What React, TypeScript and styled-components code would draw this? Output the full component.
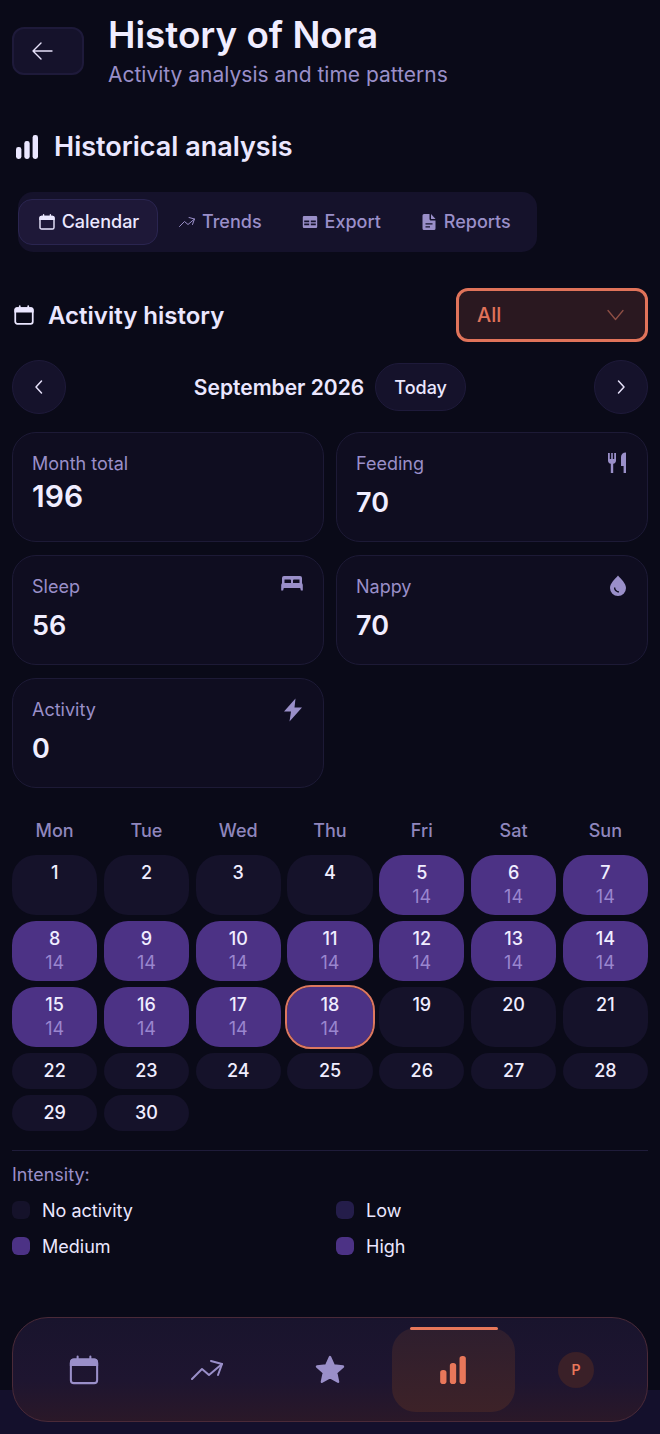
import React from 'react';
import styled, { createGlobalStyle } from 'styled-components';

const GlobalStyle = createGlobalStyle`
  html, body {
    margin: 0;
    padding: 0;
    background: #0a0a18;
    font-family: Inter, "Liberation Sans", sans-serif;
    color: #f0edff;
  }
  * { box-sizing: border-box; }
`;

const Page = styled.div`
  width: 660px;
  height: 1434px;
  overflow: hidden;
  position: relative;
  padding: 12px 12px 0;
  background: #0a0a18;
`;

const Header = styled.header`
  display: flex;
  align-items: flex-start;
  gap: 24px;
  height: 88px;
`;

const BackButton = styled.button`
  width: 72px;
  height: 48px;
  margin-top: 15px;
  display: flex;
  align-items: center;
  padding: 0 0 0 16px;
  border-radius: 12px;
  border: 2px solid #1e1a3a;
  background: #15122b;
  color: #e6e1fa;
`;

const TitleBlock = styled.div`
  display: flex;
  flex-direction: column;
`;

const Title = styled.h1`
  margin: 0;
  font-size: 36.8px;
  line-height: 46px;
  font-weight: 600;
  color: #f0edff;
`;

const Subtitle = styled.div`
  font-size: 21px;
  line-height: 34px;
  color: #9a8fc9;
`;

const SectionTitle = styled.h2`
  margin: 30px 0 0;
  display: flex;
  align-items: center;
  gap: 15px;
  padding-left: 3px;
  font-size: 27px;
  line-height: 34px;
  font-weight: 600;
  color: #ebe7ff;
`;

const TabBar = styled.div`
  display: inline-flex;
  align-items: center;
  margin: 28px 0 0 6px;
  height: 60px;
  padding: 0 6px 0 0;
  border-radius: 15px;
  background: #15122b;
`;

const Tab = styled.div<{ $active?: boolean }>`
  display: flex;
  align-items: center;
  justify-content: center;
  gap: 7px;
  height: 46px;
  width: ${(p) => p.$active ? '140px' : 'auto'};
  padding: ${(p) => p.$active ? '0 0 0 2px' : '0 20px'};
  margin-right: ${(p) => p.$active ? '1px' : '0'};
  border-radius: 14px;
  font-size: 18px;
  line-height: 22px;
  font-weight: 500;
  color: ${(p) => p.$active ? '#ebe7ff' : '#9a8fc9'};
  background: ${(p) => p.$active ? '#1e1838' : 'transparent'};
  border: ${(p) => p.$active ? '1px solid #2a2550' : 'none'};
`;

const ActivityRow = styled.div`
  display: flex;
  align-items: center;
  justify-content: space-between;
  margin-top: 36px;
`;

const ActivityTitle = styled.h3`
  margin: 0;
  display: flex;
  align-items: center;
  gap: 14px;
  padding-left: 2px;
  font-size: 24px;
  font-weight: 600;
  color: #ebe7ff;
`;

const Select = styled.div`
  width: 192px;
  height: 54px;
  display: flex;
  align-items: center;
  justify-content: space-between;
  padding: 0 21px 0 18px;
  border: 3px solid #e0735a;
  border-radius: 12px;
  background: #2a1820;
  color: #e0735a;
  font-size: 20px;
  font-weight: 500;
`;

const SelectCaret = styled.span`
  display: flex;
  color: #8f4f45;
`;

const MonthRow = styled.div`
  display: flex;
  align-items: center;
  justify-content: space-between;
  margin-top: 18px;
`;

const RoundButton = styled.div`
  width: 54px;
  height: 54px;
  display: flex;
  align-items: center;
  justify-content: center;
  border-radius: 50%;
  background: #15122b;
  border: 1px solid #1e1a3a;
  color: #e6e1fa;
`;

const MonthCenter = styled.div`
  display: flex;
  align-items: center;
  gap: 11px;
`;

const MonthName = styled.div`
  font-size: 21px;
  font-weight: 600;
  color: #ebe7ff;
`;

const TodayPill = styled.div`
  height: 48px;
  width: 91px;
  display: flex;
  align-items: center;
  justify-content: center;
  border-radius: 24px;
  background: #15122b;
  border: 1px solid #1e1a3a;
  font-size: 18px;
  font-weight: 500;
  color: #ebe7ff;
`;

const StatGrid = styled.div`
  display: grid;
  grid-template-columns: 1fr 1fr;
  gap: 13px 12px;
  margin-top: 18px;
`;

const StatCard = styled.div`
  height: 110px;
  padding: 19px 20px 0 19px;
  border-radius: 24px;
  background: #0f0d20;
  border: 1px solid #1d1a36;
`;

const StatHead = styled.div`
  display: flex;
  align-items: flex-start;
  justify-content: space-between;
  height: 24px;
  color: #9a8fc9;
`;

const StatLabel = styled.div`
  font-size: 18px;
  line-height: 24px;
`;

const StatValue = styled.div<{ $large?: boolean }>`
  margin-top: ${(p) => p.$large ? '1px' : '8px'};
  font-size: ${(p) => p.$large ? '30px' : '27px'};
  line-height: 38px;
  font-weight: 600;
  color: #f0edff;
`;

const WeekGrid = styled.div`
  display: grid;
  grid-template-columns: repeat(7, 1fr);
  gap: 6px 6.5px;
  margin-top: 30px;
`;

const WeekDay = styled.div`
  height: 31px;
  line-height: 26px;
  text-align: center;
  font-size: 18px;
  font-weight: 500;
  color: #8f86bd;
`;

const Day = styled.div<{ $filled?: boolean; $tall?: boolean; $today?: boolean }>`
  height: ${(p) => p.$tall ? '60px' : '36px'};
  padding-top: 6px;
  border-radius: ${(p) => p.$tall ? '24px' : '18px'};
  background: ${(p) => p.$filled ? '#4c3285' : '#15122a'};
  text-align: center;
  font-size: 18px;
  line-height: 24px;
  font-weight: 500;
  color: #f0edff;
  outline: ${(p) => p.$today ? '2px solid #dd7860' : 'none'};
`;

const DayCount = styled.div`
  font-size: 18px;
  line-height: 24px;
  font-weight: 400;
  color: #9a86cf;
`;

const Divider = styled.div`
  height: 1px;
  background: #1f1c3a;
  margin-top: 19px;
`;

const LegendTitle = styled.div`
  margin-top: 12px;
  font-size: 18px;
  line-height: 24px;
  color: #9a8fc9;
`;

const LegendGrid = styled.div`
  display: grid;
  grid-template-columns: 1fr 1fr;
  gap: 12px;
  margin-top: 11px;
`;

const LegendItem = styled.div`
  display: flex;
  align-items: center;
  gap: 12px;
  height: 24px;
  font-size: 18px;
  color: #ebe7ff;
`;

const Swatch = styled.span<{ $color: string }>`
  width: 18px;
  height: 18px;
  border-radius: 6px;
  background: ${(p) => p.$color};
`;

const BottomGlow = styled.div`
  position: absolute;
  left: 0;
  right: 0;
  bottom: 0;
  height: 44px;
  background: #14102c;
`;

const BottomNav = styled.nav`
  position: absolute;
  left: 12px;
  right: 12px;
  bottom: 12px;
  height: 105px;
  display: grid;
  grid-template-columns: repeat(5, 123px);
  align-items: center;
  padding: 0 9.5px;
  border-radius: 36px;
  border: 1px solid #4a2a38;
  background: linear-gradient(180deg, #19142d 0%, #1e1530 60%, #2a1828 100%);
`;

const NavItem = styled.div<{ $active?: boolean }>`
  position: relative;
  height: 84px;
  display: flex;
  align-items: center;
  justify-content: center;
  border-radius: 24px;
  color: ${(p) => p.$active ? '#e8775a' : '#9a8fc9'};
  background: ${(p) => p.$active ? 'linear-gradient(180deg, #2e1e2e, #3d2228)' : 'transparent'};
`;

const ActiveMark = styled.span`
  position: absolute;
  top: -1px;
  left: 18px;
  right: 17px;
  height: 3px;
  border-radius: 2px;
  background: #e8775a;
`;

const Avatar = styled.div`
  width: 36px;
  height: 36px;
  display: flex;
  align-items: center;
  justify-content: center;
  border-radius: 50%;
  background: #3a2028;
  color: #e8775a;
  font-size: 14px;
  font-weight: 600;
`;

const ArrowLeftIcon = () => (
  <svg width="24" height="24" viewBox="0 0 24 24" fill="none" stroke="currentColor" strokeWidth="1.4" strokeLinecap="round" strokeLinejoin="round">
    <path d="M22 12H3M11 4l-8 8 8 8" />
  </svg>
);

const BarsIcon = ({ size = 24 }: { size?: number }) => (
  <svg width={size} height={size} viewBox="0 0 24 24" fill="currentColor">
    <rect x="1" y="12" width="5.4" height="12" rx="2.4" />
    <rect x="9.3" y="6" width="5.4" height="18" rx="2.4" />
    <rect x="17.6" y="0" width="5.4" height="24" rx="2.4" />
  </svg>
);

const CalendarIcon = ({ size = 16, stroke = 1.4 }: { size?: number; stroke?: number }) => (
  <svg width={size} height={size} viewBox="0 0 16 16" fill="none" stroke="currentColor" strokeWidth={stroke} strokeLinecap="round">
    <rect x="1" y="2.4" width="14" height="12.6" rx="1.6" />
    <path d="M1 4.4c0-1.1.7-2 1.6-2h10.8c.9 0 1.6.9 1.6 2v.9H1z" fill="currentColor" />
    <path d="M4.6.8v1.6M11.4.8v1.6" />
  </svg>
);

const TrendIcon = ({ size = 16, stroke = 2 }: { size?: number; stroke?: number }) => (
  <svg width={size} height={size * 0.625} viewBox="0 0 32 20" fill="none" stroke="currentColor" strokeWidth={stroke} strokeLinecap="round" strokeLinejoin="round">
    <path d="M1 19L11 9l7 6L31 4" />
    <path d="M20 1l11 3-4 11" />
  </svg>
);

const TableIcon = () => (
  <svg width="16" height="16" viewBox="0 0 16 16" fill="currentColor">
    <path fillRule="evenodd" d="M2 2h12a1.2 1.2 0 0 1 1.2 1.2v9.6A1.2 1.2 0 0 1 14 14H2a1.2 1.2 0 0 1-1.2-1.2V3.2A1.2 1.2 0 0 1 2 2zm.2 4.6v1.700h5V6.600zm6.600 0v1.700h5V6.600zM2.200 9.500v1.700h5V9.500zm6.600 0v1.700h5V9.500z" />
  </svg>
);

const FileIcon = () => (
  <svg width="16" height="18" viewBox="0 0 16 18" fill="currentColor">
    <path fillRule="evenodd" d="M3 1h5.500v5c0 .8.700 1.500 1.500 1.500h4.500V15.500A1.500 1.500 0 0 1 13 17H3a1.500 1.500 0 0 1-1.500-1.500v-13A1.500 1.500 0 0 1 3 1zm1.500 9.200v1.300h7v-1.300zm0 3v1.300h4.500v-1.300z" />
    <path d="M10 1l4.500 5H10.500a.5.5 0 0 1-.5-.5z" />
  </svg>
);

const ChevronIcon = ({ dir }: { dir: 'left' | 'right' }) => (
  <svg width="20" height="20" viewBox="0 0 20 20" fill="none" stroke="currentColor" strokeWidth="1.5" strokeLinecap="round" strokeLinejoin="round">
    {dir === 'left' && <path d="M12.500 4l-5.500 6 5.500 6" />}
    {dir === 'right' && <path d="M7.500 4l5.500 6-5.500 6" />}
  </svg>
);

const CaretIcon = () => (
  <svg width="17" height="12" viewBox="0 0 17 12" fill="none" stroke="currentColor" strokeWidth="1.3" strokeLinecap="round" strokeLinejoin="round">
    <path d="M1 1.500l7.500 9 7.500-9" />
  </svg>
);

const UtensilsIcon = () => (
  <svg width="20" height="22" viewBox="0 0 20 22" fill="currentColor">
    <path d="M1 1h1.800v6h1.400V1H5.800v6h1.400V1H9v7.500c0 1.700-1.200 3-2.800 3.300V21H3.800v-9.200C2.200 11.500 1 10.200 1 8.500z" />
    <path d="M14 14V5c0-2.500 1.800-4.500 5-4.500V21h-2.400v-7z" />
  </svg>
);

const BedIcon = () => (
  <svg width="22" height="18" viewBox="0 0 22 18" fill="currentColor">
    <path fillRule="evenodd" d="M3 1h16a2 2 0 0 1 2 2v5l.8 1.800V15.500H19.900L19.200 13H2.800l-.7 2.500H.2V9.800L1 8V3a2 2 0 0 1 2-2zm.5 3.500V8H10V5.500a1 1 0 0 0-1-1zm9.500 0a1 1 0 0 0-1 1V8h6.500V4.500z" />
  </svg>
);

const DropIcon = () => (
  <svg width="18" height="22" viewBox="0 0 18 22" fill="currentColor">
    <path fillRule="evenodd" d="M9 .5c3 3.700 8 7.700 8 12.500a8 8 0 0 1-16 0C1 8.200 6 4.200 9 .5zM5 12.500c-.2 2.600 2 5 5 5v-1.300c-2 0-3.800-1.700-3.700-3.700z" />
  </svg>
);

const BoltIcon = () => (
  <svg width="20" height="24" viewBox="0 0 20 24" fill="currentColor">
    <path d="M12.500.5L1 13.500h7L6.500 23.500 19 9.500h-7.500z" />
  </svg>
);

const StarIcon = () => (
  <svg width="32" height="32" viewBox="0 0 32 32" fill="currentColor" stroke="currentColor" strokeWidth="2.4" strokeLinejoin="round">
    <path d="M16 3l3.800 8.500 9.200 1-6.800 6.200 1.900 9.100-8.100-4.600-8.100 4.600 1.900-9.100L3 12.500l9.200-1z" />
  </svg>
);

const stats = [
  { label: 'Month total', value: '196', icon: null, large: true },
  { label: 'Feeding', value: '70', icon: <UtensilsIcon /> },
  { label: 'Sleep', value: '56', icon: <BedIcon /> },
  { label: 'Nappy', value: '70', icon: <DropIcon /> },
  { label: 'Activity', value: '0', icon: <BoltIcon /> },
];

const weekDays = ['Mon', 'Tue', 'Wed', 'Thu', 'Fri', 'Sat', 'Sun'];
const days = Array.from({ length: 30 }, (_, i) => i + 1);

export default function App() {
  return (
    <>
      <GlobalStyle />
      <Page>
        <Header>
          <BackButton><ArrowLeftIcon /></BackButton>
          <TitleBlock>
            <Title>History of Nora</Title>
            <Subtitle>Activity analysis and time patterns</Subtitle>
          </TitleBlock>
        </Header>

        <SectionTitle><BarsIcon />Historical analysis</SectionTitle>

        <TabBar>
          <Tab $active><CalendarIcon />Calendar</Tab>
          <Tab><TrendIcon />Trends</Tab>
          <Tab><TableIcon />Export</Tab>
          <Tab><FileIcon />Reports</Tab>
        </TabBar>

        <ActivityRow>
          <ActivityTitle><CalendarIcon size={20} />Activity history</ActivityTitle>
          <Select>All<SelectCaret><CaretIcon /></SelectCaret></Select>
        </ActivityRow>

        <MonthRow>
          <RoundButton><ChevronIcon dir="left" /></RoundButton>
          <MonthCenter>
            <MonthName>September 2026</MonthName>
            <TodayPill>Today</TodayPill>
          </MonthCenter>
          <RoundButton><ChevronIcon dir="right" /></RoundButton>
        </MonthRow>

        <StatGrid>
          {stats.map((s) => (
            <StatCard key={s.label}>
              <StatHead>
                <StatLabel>{s.label}</StatLabel>
                {s.icon}
              </StatHead>
              <StatValue $large={s.large}>{s.value}</StatValue>
            </StatCard>
          ))}
        </StatGrid>

        <WeekGrid>
          {weekDays.map((d) => <WeekDay key={d}>{d}</WeekDay>)}
          {days.map((d) => (
            <Day key={d} $tall={d <= 21} $filled={d >= 5 && d <= 18} $today={d === 18}>
              {d}
              {d >= 5 && d <= 18 && <DayCount>14</DayCount>}
            </Day>
          ))}
        </WeekGrid>

        <Divider />
        <LegendTitle>Intensity:</LegendTitle>
        <LegendGrid>
          <LegendItem><Swatch $color="#15122a" />No activity</LegendItem>
          <LegendItem><Swatch $color="#241d4a" />Low</LegendItem>
          <LegendItem><Swatch $color="#4c3285" />Medium</LegendItem>
          <LegendItem><Swatch $color="#4c3285" />High</LegendItem>
        </LegendGrid>

        <BottomGlow />
        <BottomNav>
          <NavItem><CalendarIcon size={30} stroke={1.1} /></NavItem>
          <NavItem><TrendIcon size={32} /></NavItem>
          <NavItem><StarIcon /></NavItem>
          <NavItem $active><ActiveMark /><BarsIcon size={28} /></NavItem>
          <NavItem><Avatar>P</Avatar></NavItem>
        </BottomNav>
      </Page>
    </>
  );
}
